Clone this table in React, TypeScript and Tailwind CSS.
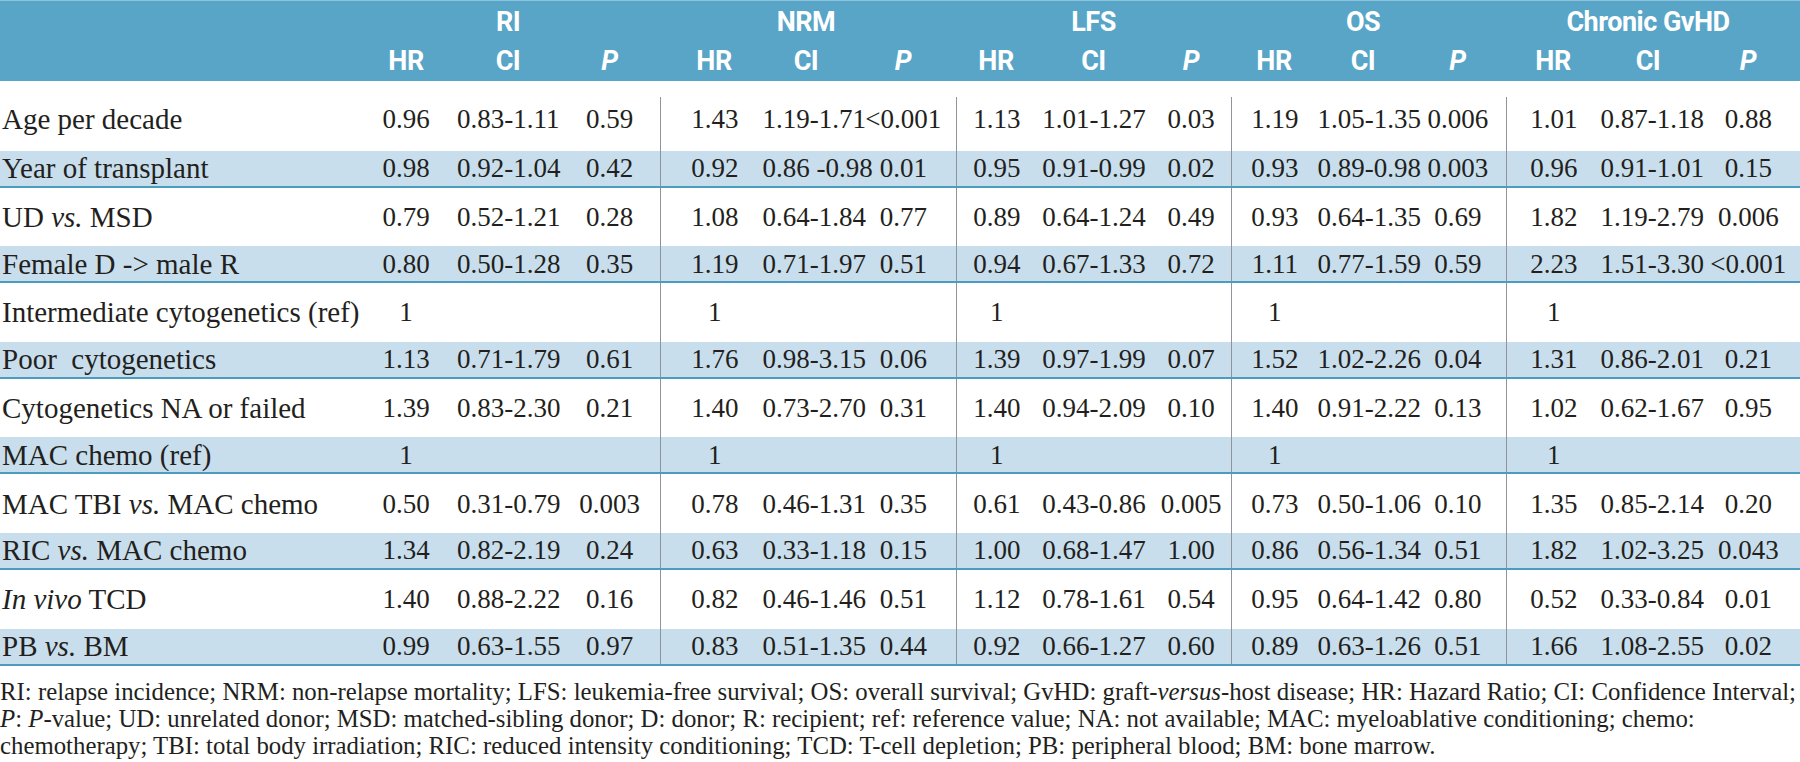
import React from 'react';

type Cells = [string, string, string];

const groups = [
    { title: 'RI', box: 'w-[305px]', cols: ['w-[102px]', 'w-[102px]', 'w-[101px]'] },
    { title: 'NRM', box: 'w-[296px] pl-[6px]', cols: ['w-[96px]', 'w-[88px]', 'w-[106px]'] },
    { title: 'LFS', box: 'w-[275px]', cols: ['w-[80px]', 'w-[115px]', 'w-[80px]'] },
    { title: 'OS', box: 'w-[275px]', cols: ['w-[86px]', 'w-[92px]', 'w-[97px]'] },
    { title: 'Chronic GvHD', box: 'w-[294px]', cols: ['w-[94px]', 'w-[96px]', 'w-[104px]'] },
];

const ref: Cells = ['1', '', ''];

const rows: { label: React.ReactNode; cells: Cells[] }[] = [
    { label: 'Age per decade', cells: [['0.96', '0.83-1.11', '0.59'], ['1.43', '1.19-1.71', '<0.001'], ['1.13', '1.01-1.27', '0.03'], ['1.19', '1.05-1.35', '0.006'], ['1.01', '0.87-1.18', '0.88']] },
    { label: 'Year of transplant', cells: [['0.98', '0.92-1.04', '0.42'], ['0.92', '0.86 -0.98', '0.01'], ['0.95', '0.91-0.99', '0.02'], ['0.93', '0.89-0.98', '0.003'], ['0.96', '0.91-1.01', '0.15']] },
    { label: <>UD <i>vs.</i> MSD</>, cells: [['0.79', '0.52-1.21', '0.28'], ['1.08', '0.64-1.84', '0.77'], ['0.89', '0.64-1.24', '0.49'], ['0.93', '0.64-1.35', '0.69'], ['1.82', '1.19-2.79', '0.006']] },
    { label: 'Female D -> male R', cells: [['0.80', '0.50-1.28', '0.35'], ['1.19', '0.71-1.97', '0.51'], ['0.94', '0.67-1.33', '0.72'], ['1.11', '0.77-1.59', '0.59'], ['2.23', '1.51-3.30', '<0.001']] },
    { label: 'Intermediate cytogenetics (ref)', cells: [ref, ref, ref, ref, ref] },
    { label: 'Poor\u00a0 cytogenetics', cells: [['1.13', '0.71-1.79', '0.61'], ['1.76', '0.98-3.15', '0.06'], ['1.39', '0.97-1.99', '0.07'], ['1.52', '1.02-2.26', '0.04'], ['1.31', '0.86-2.01', '0.21']] },
    { label: 'Cytogenetics NA or failed', cells: [['1.39', '0.83-2.30', '0.21'], ['1.40', '0.73-2.70', '0.31'], ['1.40', '0.94-2.09', '0.10'], ['1.40', '0.91-2.22', '0.13'], ['1.02', '0.62-1.67', '0.95']] },
    { label: 'MAC chemo (ref)', cells: [ref, ref, ref, ref, ref] },
    { label: <>MAC TBI <i>vs.</i> MAC chemo</>, cells: [['0.50', '0.31-0.79', '0.003'], ['0.78', '0.46-1.31', '0.35'], ['0.61', '0.43-0.86', '0.005'], ['0.73', '0.50-1.06', '0.10'], ['1.35', '0.85-2.14', '0.20']] },
    { label: <>RIC <i>vs.</i> MAC chemo</>, cells: [['1.34', '0.82-2.19', '0.24'], ['0.63', '0.33-1.18', '0.15'], ['1.00', '0.68-1.47', '1.00'], ['0.86', '0.56-1.34', '0.51'], ['1.82', '1.02-3.25', '0.043']] },
    { label: <><i>In vivo</i> TCD</>, cells: [['1.40', '0.88-2.22', '0.16'], ['0.82', '0.46-1.46', '0.51'], ['1.12', '0.78-1.61', '0.54'], ['0.95', '0.64-1.42', '0.80'], ['0.52', '0.33-0.84', '0.01']] },
    { label: <>PB <i>vs.</i> BM</>, cells: [['0.99', '0.63-1.55', '0.97'], ['0.83', '0.51-1.35', '0.44'], ['0.92', '0.66-1.27', '0.60'], ['0.89', '0.63-1.26', '0.51'], ['1.66', '1.08-2.55', '0.02']] },
];

const App: React.FC = () => {
    return (
        <div className="w-[1800px] h-[762px] bg-white text-[#231f20] font-['Liberation_Serif',serif] overflow-hidden">
            {/* Header band */}
            <div className="h-[81px] bg-[#58a5c8] border-t border-[#8cc4dd] text-white font-['Roboto',sans-serif] font-bold text-[27px] leading-[32px] tracking-[-0.5px]">
                <div className="flex pt-[5px]">
                    <div className="w-[355px]" />
                    {groups.map((g) => (
                        <div key={g.title} className={`flex ${g.box}`}>
                            <div className={g.cols[0]} />
                            <div className={`flex justify-center whitespace-nowrap ${g.cols[1]}`}>{g.title}</div>
                            <div className={g.cols[2]} />
                        </div>
                    ))}
                </div>
                <div className="flex mt-[7px]">
                    <div className="w-[355px]" />
                    {groups.map((g) => (
                        <div key={g.title} className={`flex ${g.box}`}>
                            <div className={`text-center ${g.cols[0]}`}>HR</div>
                            <div className={`text-center ${g.cols[1]}`}>CI</div>
                            <div className={`text-center italic ${g.cols[2]}`}>P</div>
                        </div>
                    ))}
                </div>
            </div>

            {/* Body rows */}
            <div className="mt-[11px]">
                {rows.map((r, i) => {
                    const shaded = i % 2 === 1;
                    const first = i === 0;
                    return (
                        <div
                            key={i}
                            className={
                                shaded
                                    ? 'flex h-[37px] bg-[#c8deec] border-b-2 border-[#4a9dbf]'
                                    : `flex h-[58.6px] ${first ? 'pt-[5px]' : ''}`
                            }
                        >
                            <div className={`w-[355px] pl-[2px] flex items-center text-[29px] leading-[32px] whitespace-nowrap ${first ? 'pb-[10px]' : ''}`}>
                                <span>{r.label}</span>
                            </div>
                            {r.cells.map((c, gi) => {
                                const g = groups[gi];
                                return (
                                    <div
                                        key={gi}
                                        className={`flex items-center text-[27px] leading-[32px] ${g.box} ${gi > 0 ? 'border-l border-[#8e9497]' : ''} ${first ? 'pb-[10px]' : ''}`}
                                    >
                                        <div className={`text-center whitespace-nowrap ${g.cols[0]}`}>{c[0]}</div>
                                        <div className={`text-center whitespace-nowrap ${g.cols[1]}`}>{c[1]}</div>
                                        <div className={`text-center whitespace-nowrap ${g.cols[2]}`}>{c[2]}</div>
                                    </div>
                                );
                            })}
                        </div>
                    );
                })}
            </div>

            {/* Footnote */}
            <div className="mt-[12px] text-[24.8px] leading-[27px] whitespace-nowrap">
                <p>RI: relapse incidence; NRM: non-relapse mortality; LFS: leukemia-free survival; OS: overall survival; GvHD: graft-<i>versus</i>-host disease; HR: Hazard Ratio; CI: Confidence Interval;</p>
                <p><i>P</i>: <i>P</i>-value; UD: unrelated donor; MSD: matched-sibling donor; D: donor; R: recipient; ref: reference value; NA: not available; MAC: myeloablative conditioning; chemo:</p>
                <p>chemotherapy; TBI: total body irradiation; RIC: reduced intensity conditioning; TCD: T-cell depletion; PB: peripheral blood; BM: bone marrow.</p>
            </div>
        </div>
    );
};

export default App;
